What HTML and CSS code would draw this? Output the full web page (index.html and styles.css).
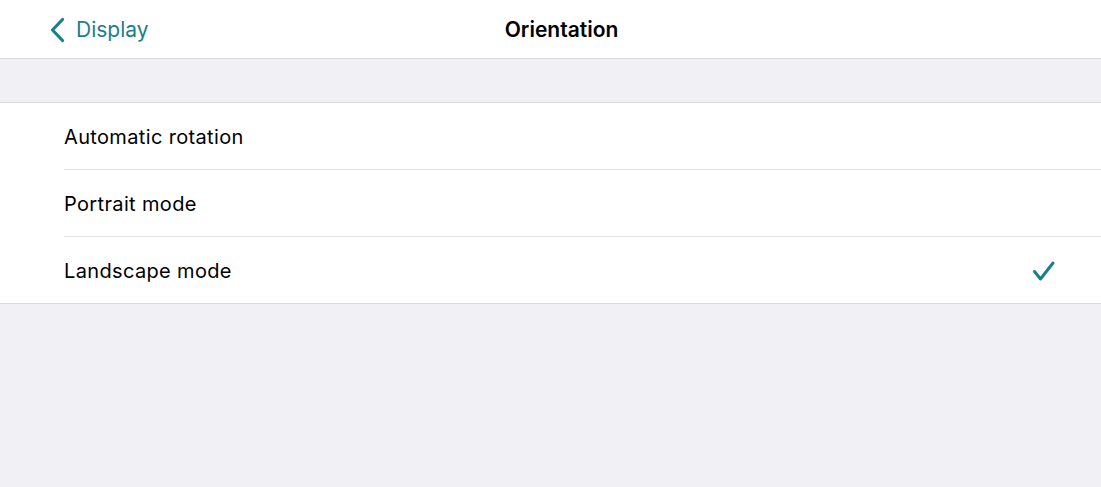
FILE: index.html
```html
<!DOCTYPE html>
<html>
<head>
<meta charset="utf-8">
<link rel="stylesheet" href="styles.css">
</head>
<body>
<div class="app">
  <header class="nav">
    <div class="back">
      <svg class="chev" width="18" height="26" viewBox="0 0 18 26"><path d="M14.5 2.5 L4.5 13 L14.5 23.5" fill="none" stroke="#1b7e8c" stroke-width="3.2" stroke-linecap="round" stroke-linejoin="round"/></svg>
      <span class="back-label">Display</span>
    </div>
    <div class="title">Orientation</div>
  </header>
  <div class="gap"></div>
  <ul class="list">
    <li class="row"><span>Automatic rotation</span></li>
    <li class="row"><span>Portrait mode</span></li>
    <li class="row"><span>Landscape mode</span>
      <svg class="check" width="24" height="22" viewBox="0 0 24 22"><path d="M2.5 11.5 L8.5 19 L21 3" fill="none" stroke="#1b7e8c" stroke-width="3" stroke-linecap="round" stroke-linejoin="round"/></svg>
    </li>
  </ul>
</div>
</body>
</html>
```
FILE: styles.css
```css
* { box-sizing: border-box; }
html, body { margin: 0; padding: 0; }
body {
  background: #f1f0f5;
  font-family: Inter, "Noto Sans", sans-serif;
  color: #000;
  width: 1101px;
  height: 487px;
  overflow: hidden;
}
.nav {
  position: relative;
  height: 59px;
  background: #fff;
  border-bottom: 1px solid #d9d9de;
  display: flex;
  align-items: center;
}
.back {
  display: flex;
  align-items: center;
  padding-left: 48px;
  gap: 10px;
  color: #1b7e8c;
  font-size: 21px;
}
.chev { display: block; margin-top: 1px; }
.back-label { letter-spacing: 0; }
.title {
  position: absolute;
  left: 0; right: 0; top: 0; bottom: 0;
  display: flex;
  align-items: center;
  justify-content: center;
  font-size: 21px;
  font-weight: 600;
  pointer-events: none;
  padding-left: 22px;
  padding-top: 1px;
}
.gap { height: 43px; }
.list {
  list-style: none;
  margin: 0;
  padding: 0 0 0 64px;
  background: #fff;
  border-top: 1px solid #d9d9de;
  border-bottom: 1px solid #d9d9de;
}
.row {
  height: 67px;
  display: flex;
  align-items: center;
  justify-content: space-between;
  padding-right: 45px;
  padding-top: 2px;
  font-size: 20px;
  letter-spacing: 0.35px;
  border-bottom: 1px solid #e3e3e7;
}
.row:last-child { border-bottom: none; height: 66px; }
.check { display: block; margin-top: -1px; }
```
